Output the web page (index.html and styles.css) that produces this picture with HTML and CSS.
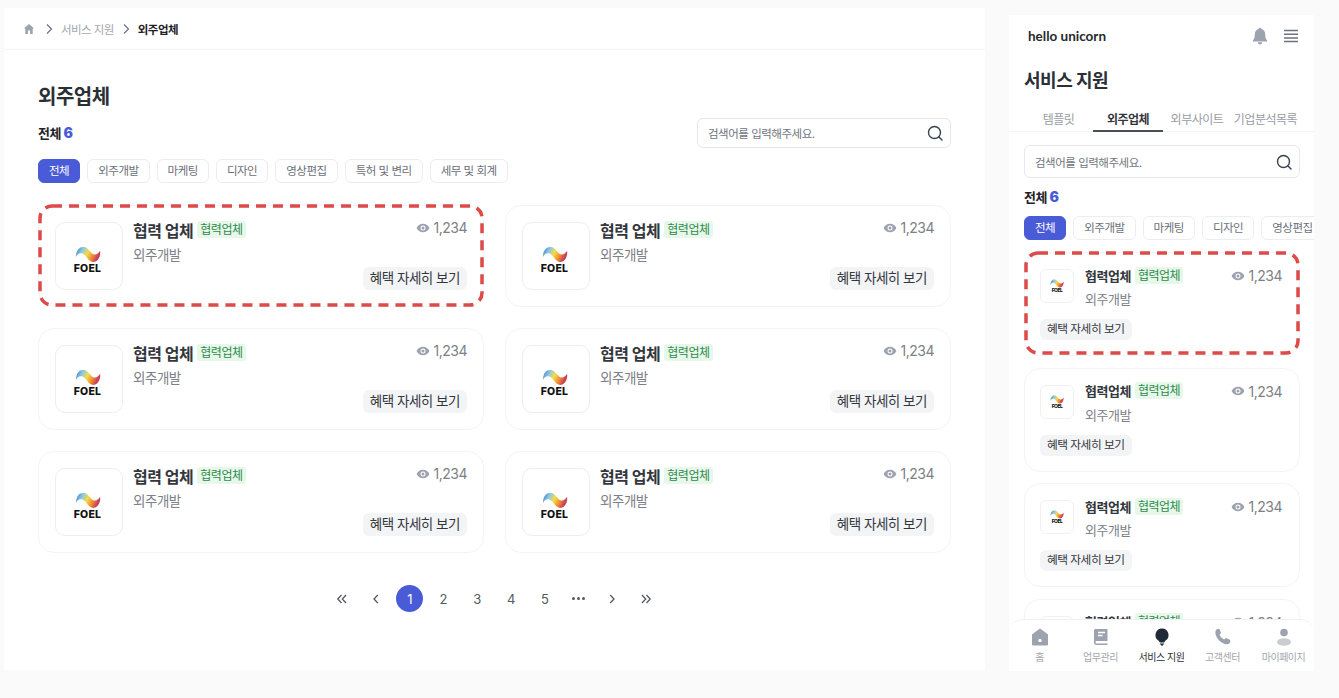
FILE: index.html
```html
<!DOCTYPE html>
<html lang="ko">
<head>
  <meta charset="UTF-8" />
  <meta name="viewport" content="width=device-width, initial-scale=1.0"/>
  <title>외주업체</title>
  <link rel="stylesheet" href="styles.css">
</head>
<body>
  <svg class="defs" width="0" height="0">
    <defs>
      <linearGradient id="wave" x1="0" y1="0" x2="1" y2="0.3">
        <stop offset="0%" stop-color="#2a76cf"/>
        <stop offset="30%" stop-color="#8fc9e0"/>
        <stop offset="55%" stop-color="#f4dc4a"/>
        <stop offset="80%" stop-color="#ef8a2e"/>
        <stop offset="100%" stop-color="#c9405c"/>
      </linearGradient>
      <symbol id="logo" viewBox="0 0 28 18">
        <path d="M1 12C1 3 6 0 10 1c5 1 7 8 11 8 3 0 5-2 6-4 1 5-2 12-7 12-6 0-8-8-12-9-3-1-6 1-7 4z" fill="url(#wave)"/>
      </symbol>
      <symbol id="eye" viewBox="0 0 14 14">
        <path d="M7 2.800C4 2.800 1.600 4.600.6 7c1 2.400 3.400 4.200 6.400 4.200s5.400-1.800 6.400-4.200C12.400 4.600 10 2.800 7 2.800z" fill="#9ca3af"/>
        <circle cx="7" cy="7" r="2.500" fill="#fff"/>
        <circle cx="7" cy="7" r="1.500" fill="#9ca3af"/>
      </symbol>
      <symbol id="search" viewBox="0 0 18 18">
        <circle cx="8.500" cy="8.500" r="6" fill="none" stroke="#374151" stroke-width="1.400"/>
        <path d="M13 13l3 3" fill="none" stroke="#374151" stroke-width="1.400" stroke-linecap="round"/>
      </symbol>
    </defs>
  </svg>

  <!-- PC 화면 -->
  <main class="desk">
    <div class="crumbs">
      <svg class="crumb-home" viewBox="0 0 12 12"><path d="M6 1L.8 5.600h1.500V11h2.600V7.600h2.200V11h2.600V5.600h1.500z" fill="#9ca3af"/></svg>
      <svg class="crumb-arrow" viewBox="0 0 8 12"><path d="M2 1.500L6.500 6 2 10.500" fill="none" stroke="#6b7280" stroke-width="1.200"/></svg>
      <span class="crumb-link">서비스 지원</span>
      <svg class="crumb-arrow" viewBox="0 0 8 12"><path d="M2 1.500L6.500 6 2 10.500" fill="none" stroke="#6b7280" stroke-width="1.200"/></svg>
      <strong class="crumb-now">외주업체</strong>
    </div>

    <div class="desk-body">
      <h1 class="desk-title">외주업체</h1>
      <div class="count-row">
        <div class="count">전체 <b>6</b></div>
        <div class="search">
          <span>검색어를 입력해주세요.</span>
          <svg class="search-icon"><use href="#search"/></svg>
        </div>
      </div>
      <div class="chips">
        <span class="chip on">전체</span>
        <span class="chip">외주개발</span>
        <span class="chip">마케팅</span>
        <span class="chip">디자인</span>
        <span class="chip">영상편집</span>
        <span class="chip">특허 및 변리</span>
        <span class="chip">세무 및 회계</span>
      </div>

      <div class="grid">
        <div class="card">
          <svg class="dash" width="446" height="104"><rect x="2" y="2" width="442" height="99" rx="12"/></svg>
          <div class="thumb"><svg class="wave"><use href="#logo"/></svg><span class="foel">FOEL</span></div>
          <div class="info">
            <div class="top">
              <span class="name">협력 업체</span><span class="badge">협력업체</span>
              <span class="views"><svg class="eye"><use href="#eye"/></svg>1,234</span>
            </div>
            <div class="kind">외주개발</div>
            <div class="more-row"><span class="more">혜택 자세히 보기</span></div>
          </div>
        </div>
        <div class="card">
          <div class="thumb"><svg class="wave"><use href="#logo"/></svg><span class="foel">FOEL</span></div>
          <div class="info">
            <div class="top">
              <span class="name">협력 업체</span><span class="badge">협력업체</span>
              <span class="views"><svg class="eye"><use href="#eye"/></svg>1,234</span>
            </div>
            <div class="kind">외주개발</div>
            <div class="more-row"><span class="more">혜택 자세히 보기</span></div>
          </div>
        </div>
        <div class="card">
          <div class="thumb"><svg class="wave"><use href="#logo"/></svg><span class="foel">FOEL</span></div>
          <div class="info">
            <div class="top">
              <span class="name">협력 업체</span><span class="badge">협력업체</span>
              <span class="views"><svg class="eye"><use href="#eye"/></svg>1,234</span>
            </div>
            <div class="kind">외주개발</div>
            <div class="more-row"><span class="more">혜택 자세히 보기</span></div>
          </div>
        </div>
        <div class="card">
          <div class="thumb"><svg class="wave"><use href="#logo"/></svg><span class="foel">FOEL</span></div>
          <div class="info">
            <div class="top">
              <span class="name">협력 업체</span><span class="badge">협력업체</span>
              <span class="views"><svg class="eye"><use href="#eye"/></svg>1,234</span>
            </div>
            <div class="kind">외주개발</div>
            <div class="more-row"><span class="more">혜택 자세히 보기</span></div>
          </div>
        </div>
        <div class="card">
          <div class="thumb"><svg class="wave"><use href="#logo"/></svg><span class="foel">FOEL</span></div>
          <div class="info">
            <div class="top">
              <span class="name">협력 업체</span><span class="badge">협력업체</span>
              <span class="views"><svg class="eye"><use href="#eye"/></svg>1,234</span>
            </div>
            <div class="kind">외주개발</div>
            <div class="more-row"><span class="more">혜택 자세히 보기</span></div>
          </div>
        </div>
        <div class="card">
          <div class="thumb"><svg class="wave"><use href="#logo"/></svg><span class="foel">FOEL</span></div>
          <div class="info">
            <div class="top">
              <span class="name">협력 업체</span><span class="badge">협력업체</span>
              <span class="views"><svg class="eye"><use href="#eye"/></svg>1,234</span>
            </div>
            <div class="kind">외주개발</div>
            <div class="more-row"><span class="more">혜택 자세히 보기</span></div>
          </div>
        </div>
      </div>

      <div class="pager">
        <span class="pg"><svg viewBox="0 0 12 12"><path d="M5.500 2L1.800 6l3.700 4M10 2L6.300 6l3.700 4"/></svg></span>
        <span class="pg"><svg viewBox="0 0 12 12"><path d="M7.800 2L4 6l3.800 4"/></svg></span>
        <span class="pg cur">1</span>
        <span class="pg">2</span>
        <span class="pg">3</span>
        <span class="pg">4</span>
        <span class="pg">5</span>
        <span class="pg dots"><i></i><i></i><i></i></span>
        <span class="pg"><svg viewBox="0 0 12 12"><path d="M4.200 2L8 6l-3.800 4"/></svg></span>
        <span class="pg"><svg viewBox="0 0 12 12"><path d="M2 2l3.700 4L2 10M6.500 2l3.700 4-3.700 4"/></svg></span>
      </div>
    </div>
  </main>

  <!-- 모바일 화면 -->
  <section class="phone">
    <header class="ph-head">
      <span class="brand">hello unicorn</span>
      <div class="ph-icons">
        <svg class="bell" viewBox="0 0 18 18"><path d="M9 .8c-.800 0-1.300.500-1.400 1.200C5 2.700 3.800 4.700 3.800 7.200c0 3.300-.500 4.800-2 6.200v1h14.400v-1c-1.500-1.400-2-2.900-2-6.200 0-2.500-1.200-4.500-3.800-5.200C10.300 1.300 9.800.800 9 .800z" fill="#9ca3af"/><path d="M6.800 15.200a2.200 2.200 0 0 0 4.400 0z" fill="#9ca3af"/></svg>
        <svg class="burger" viewBox="0 0 14 14"><path d="M0 1.500h14M0 5.200h14M0 8.900h14M0 12.500h14" stroke="#6b7280" stroke-width="1.500"/></svg>
      </div>
    </header>
    <h2 class="ph-title">서비스 지원</h2>
    <nav class="tabs">
      <span class="tab">템플릿</span>
      <span class="tab on">외주업체</span>
      <span class="tab">외부사이트</span>
      <span class="tab">기업분석목록</span>
    </nav>
    <div class="ph-body">
      <div class="search ph-search">
        <span>검색어를 입력해주세요.</span>
        <svg class="search-icon"><use href="#search"/></svg>
      </div>
      <div class="count ph-count">전체 <b>6</b></div>
      <div class="chips ph-chips">
        <span class="chip on">전체</span>
        <span class="chip">외주개발</span>
        <span class="chip">마케팅</span>
        <span class="chip">디자인</span>
        <span class="chip">영상편집</span>
      </div>
      <div class="ph-list">
        <div class="ph-card">
          <svg class="dash" width="276" height="106"><rect x="2" y="2" width="272" height="100" rx="12"/></svg>
          <div class="ph-top">
            <div class="ph-thumb"><svg class="wave-s"><use href="#logo"/></svg><span class="foel-s">FOEL</span></div>
            <div class="ph-info">
              <div class="top"><span class="ph-name">협력업체</span><span class="badge ph-badge">협력업체</span><span class="views ph-views"><svg class="eye"><use href="#eye"/></svg>1,234</span></div>
              <div class="ph-kind">외주개발</div>
            </div>
          </div>
          <span class="more ph-more">혜택 자세히 보기</span>
        </div>
        <div class="ph-card">
          <div class="ph-top">
            <div class="ph-thumb"><svg class="wave-s"><use href="#logo"/></svg><span class="foel-s">FOEL</span></div>
            <div class="ph-info">
              <div class="top"><span class="ph-name">협력업체</span><span class="badge ph-badge">협력업체</span><span class="views ph-views"><svg class="eye"><use href="#eye"/></svg>1,234</span></div>
              <div class="ph-kind">외주개발</div>
            </div>
          </div>
          <span class="more ph-more">혜택 자세히 보기</span>
        </div>
        <div class="ph-card">
          <div class="ph-top">
            <div class="ph-thumb"><svg class="wave-s"><use href="#logo"/></svg><span class="foel-s">FOEL</span></div>
            <div class="ph-info">
              <div class="top"><span class="ph-name">협력업체</span><span class="badge ph-badge">협력업체</span><span class="views ph-views"><svg class="eye"><use href="#eye"/></svg>1,234</span></div>
              <div class="ph-kind">외주개발</div>
            </div>
          </div>
          <span class="more ph-more">혜택 자세히 보기</span>
        </div>
        <div class="ph-card">
          <div class="ph-top">
            <div class="ph-thumb"></div>
            <div class="ph-info">
              <div class="top"><span class="ph-name">협력업체</span><span class="badge ph-badge">협력업체</span><span class="views ph-views"><svg class="eye"><use href="#eye"/></svg>1,234</span></div>
            </div>
          </div>
        </div>
      </div>
    </div>

    <!-- 하단 메뉴 -->
    <nav class="bottom">
      <div class="bt">
        <svg viewBox="0 0 18 18"><path d="M9 1L1.500 6.500V17h15V6.500z" fill="#9ca3af" stroke="#9ca3af" stroke-linejoin="round"/><circle cx="9" cy="12.500" r="1.700" fill="#fff"/></svg>
        <span>홈</span>
      </div>
      <div class="bt">
        <svg viewBox="0 0 18 18"><path d="M3 1h12.500v12H5c-1 0-1.500.500-1.500 1.200S4 15.500 5 15.500h10.500V17H4.500C3 17 2 16 2 14.500V2z" fill="#9ca3af"/><path d="M6 4.500h7M6 7.500h4.500" stroke="#fff" stroke-width="1.300"/></svg>
        <span>업무관리</span>
      </div>
      <div class="bt act">
        <svg viewBox="0 0 18 18"><path d="M9 .5a6.500 6.500 0 0 0-3.500 12L6.500 14h5l1-1.500A6.500 6.500 0 0 0 9 .5z" fill="#1f2937"/><path d="M6.800 15h4.400M7.500 16.500h3M8.200 17.800h1.600" stroke="#1f2937" stroke-width="1"/></svg>
        <span>서비스 지원</span>
      </div>
      <div class="bt">
        <svg viewBox="0 0 18 18"><path d="M2.500 1.500c1.500-1 3-.800 3.500.500l.8 2.200c.300 1-.300 1.600-1.300 2.300.800 2.300 2.400 4 4.700 5 .800-1 1.500-1.500 2.500-1.200l2.700 1.100c1.200.500 1.300 2.200.300 3.600-1 1.300-3 1.800-5.500.800C6 14.300 3 10.800 1.800 7 1 4.500 1.300 2.500 2.500 1.500z" fill="#9ca3af"/></svg>
        <span>고객센터</span>
      </div>
      <div class="bt">
        <svg viewBox="0 0 18 18"><circle cx="9" cy="4.500" r="3.800" fill="#9ca3af"/><ellipse cx="9" cy="14" rx="7" ry="3.800" fill="#c9ccd1"/></svg>
        <span>마이페이지</span>
      </div>
    </nav>
  </section>
</body>
</html>
```

FILE: styles.css
```css
html, body {
  margin: 0;
  padding: 0;
  height: 100%;
  overflow: hidden;
}

body {
  background: #fafafa;
  color: #1f2329;
  font-family: Inter, "Noto Sans CJK KR", sans-serif;
  display: flex;
  align-items: flex-start;
  letter-spacing: -0.03em;
}

.defs {
  position: absolute;
}

/* PC 화면 */
.desk {
  width: 981px;
  height: 662px;
  margin: 8px 0 0 4px;
  background: #fff;
  flex: none;
}

.crumbs {
  height: 41px;
  border-bottom: 1px solid #f3f4f6;
  padding-left: 19px;
  display: flex;
  align-items: center;
  font-size: 11.500px;
}

.crumb-home {
  width: 12px;
  height: 12px;
  margin-right: 10px;
}

.crumb-arrow {
  width: 8px;
  height: 12px;
  margin-right: 8px;
}

.crumb-link {
  color: #a3a7ae;
  margin-right: 8px;
  letter-spacing: -0.05em;
}

.crumb-now {
  font-weight: 700;
  color: #1f2329;
  margin-left: 0;
}

.desk-body {
  padding: 32px 34px 0;
}

.desk-title {
  margin: 0;
  font-size: 20px;
  line-height: 30px;
  font-weight: 700;
  color: #2b2f36;
}

.count-row {
  display: flex;
  justify-content: space-between;
  align-items: center;
  margin-top: 6px;
  height: 30px;
}

.count {
  font-size: 13px;
  font-weight: 700;
  margin-top: -2px;
}

.count b {
  color: #4a5bd8;
  font-size: 14px;
}

.search {
  width: 254px;
  height: 30px;
  box-sizing: border-box;
  border: 1px solid #e5e7eb;
  border-radius: 6px;
  padding: 0 6px 0 10px;
  display: flex;
  align-items: center;
  justify-content: space-between;
  font-size: 11.500px;
  color: #70757d;
}

.search-icon {
  width: 18px;
  height: 18px;
}

.chips {
  display: flex;
  gap: 7px;
  margin-top: 11px;
}

.chip {
  height: 24px;
  box-sizing: border-box;
  padding: 0 10px;
  border: 1px solid #ebedf0;
  border-radius: 6px;
  font-size: 11.500px;
  line-height: 22px;
  color: #6b7078;
  white-space: nowrap;
  flex: none;
}

.chip.on {
  background: #4a5bd8;
  border-color: #4a5bd8;
  color: #fff;
}

.grid {
  display: grid;
  grid-template-columns: 446px 446px;
  column-gap: 21px;
  row-gap: 21px;
  margin-top: 22px;
}

.card {
  position: relative;
  height: 102px;
  box-sizing: border-box;
  padding: 16px 16px 0 16px;
  border: 1px solid #f3f4f6;
  border-radius: 16px;
  display: flex;
  gap: 10px;
}

.dash {
  position: absolute;
  left: -1px;
  top: -2px;
}

.dash rect {
  fill: none;
  stroke: #dd4a4a;
  stroke-width: 3.500;
  stroke-dasharray: 10 7;
}

.thumb {
  width: 68px;
  height: 68px;
  box-sizing: border-box;
  border: 1px solid #eceef0;
  border-radius: 10px;
  display: flex;
  flex-direction: column;
  align-items: center;
  justify-content: center;
  flex: none;
}

.wave {
  width: 26px;
  height: 17px;
  margin: 8px 3px 1px 0;
}

.foel {
  font-size: 10.500px;
  font-weight: 800;
  line-height: 10px;
  letter-spacing: 0.02em;
  color: #111;
  margin-right: 3px;
}

.info {
  flex: 1;
  min-width: 0;
  margin-top: -2px;
}

.top {
  display: flex;
  align-items: center;
  height: 18px;
}

.name {
  font-size: 16px;
  font-weight: 700;
  color: #33373d;
  margin-top: 1px;
}

.badge {
  margin-left: 4px;
  padding: 0 3px;
  background: #e7f8ea;
  border-radius: 3px;
  color: #2e8a4c;
  font-size: 12px;
  line-height: 17px;
}

.views {
  margin-left: auto;
  margin-top: -3px;
  display: flex;
  align-items: center;
  gap: 3px;
  color: #7c8087;
  font-size: 14px;
}

.eye {
  width: 14px;
  height: 14px;
}

.kind {
  margin-top: 7px;
  font-size: 13.500px;
  line-height: 20px;
  color: #7c8087;
}

.more-row {
  display: flex;
  justify-content: flex-end;
  margin-top: 2px;
}

.more {
  background: #f3f4f6;
  border-radius: 6px;
  padding: 0 7px;
  height: 23px;
  line-height: 23px;
  font-size: 13.500px;
  color: #33373d;
  white-space: nowrap;
}

.pager {
  display: flex;
  justify-content: center;
  margin-top: 32px;
  margin-right: 1px;
}

.pg {
  width: 27px;
  height: 27px;
  margin: 0 3.400px;
  display: flex;
  align-items: center;
  justify-content: center;
  font-size: 13px;
  color: #555a62;
  border-radius: 50%;
}

.pg svg {
  width: 12px;
  height: 12px;
}

.pg svg path {
  fill: none;
  stroke: #555a62;
  stroke-width: 1.300;
}

.pg.cur {
  background: #4a5bd8;
  color: #fff;
}

.dots {
  gap: 2px;
}

.dots i {
  width: 3px;
  height: 3px;
  border-radius: 50%;
  background: #555a62;
}

/* 모바일 화면 */
.phone {
  position: relative;
  width: 305px;
  height: 656px;
  margin: 15px 0 0 24px;
  background: #fff;
  overflow: hidden;
  flex: none;
}

.ph-head {
  display: flex;
  justify-content: space-between;
  align-items: center;
  padding: 9px 16px 1px 19px;
  height: 24px;
}

.brand {
  font-family: Lato, sans-serif;
  font-size: 13.500px;
  font-weight: 700;
  letter-spacing: 0;
  color: #26292e;
}

.ph-icons {
  display: flex;
  align-items: center;
  gap: 15px;
}

.bell {
  width: 18px;
  height: 18px;
}

.burger {
  width: 14px;
  height: 14px;
}

.ph-title {
  margin: 19px 0 0 15px;
  font-size: 18px;
  line-height: 26px;
  font-weight: 700;
  color: #2b2f36;
}

.tabs {
  display: flex;
  margin-top: 13px;
  height: 25px;
  box-sizing: border-box;
  border-bottom: 1px solid #f3f4f6;
  padding-left: 15px;
}

.tab {
  font-size: 12px;
  line-height: 25px;
  color: #989ca3;
  text-align: center;
  white-space: nowrap;
  width: 68px;
  flex: none;
}

.tab:first-child {
  width: 69px;
}

.tab:nth-child(4) {
  width: 69px;
}

.tab.on {
  font-weight: 700;
  color: #33373d;
  width: 70px;
  height: 25px;
  box-sizing: border-box;
  border-bottom: 2px solid #4b4f56;
}

.ph-body {
  padding: 13px 0 0 15px;
}

.ph-search {
  width: 276px;
  height: 33px;
}

.ph-count {
  margin-top: 9px;
  line-height: 20px;
}

.ph-chips {
  margin-top: 9px;
}

.ph-list {
  display: flex;
  flex-direction: column;
  gap: 11.500px;
  margin-top: 12px;
  width: 276px;
}

.ph-card {
  position: relative;
  height: 104px;
  box-sizing: border-box;
  flex: none;
  padding: 14px 17px 0 15px;
  border: 1px solid #f3f4f6;
  border-radius: 16px;
}

.ph-top {
  display: flex;
  gap: 11px;
}

.ph-thumb {
  width: 34px;
  height: 34px;
  box-sizing: border-box;
  border: 1px solid #f0f1f3;
  border-radius: 6px;
  margin-top: 2px;
  display: flex;
  flex-direction: column;
  align-items: center;
  justify-content: center;
  flex: none;
}

.wave-s {
  width: 14px;
  height: 9px;
}

.foel-s {
  font-size: 5px;
  font-weight: 800;
  line-height: 5px;
  color: #111;
}

.ph-info {
  flex: 1;
  min-width: 0;
}

.ph-name {
  font-size: 13px;
  font-weight: 700;
  color: #33373d;
  margin-top: -2px;
}

.ph-badge {
  margin-left: 4px;
  margin-top: -2px;
}

.ph-views {
  margin-top: -1px;
}

.ph-kind {
  font-size: 13px;
  line-height: 20px;
  margin-top: 4px;
  color: #7c8087;
}

.ph-more {
  display: inline-block;
  margin-top: 10px;
  height: 21px;
  line-height: 21px;
  font-size: 11.700px;
}

.bottom {
  position: absolute;
  left: 0;
  right: 0;
  bottom: 0;
  height: 51px;
  background: #fff;
  border-top: 1px solid #f0f1f3;
  border-radius: 14px 14px 0 0;
  display: grid;
  grid-template-columns: repeat(5, 1fr);
}

.bt {
  display: flex;
  flex-direction: column;
  align-items: center;
  padding-top: 8px;
  color: #a3a7ae;
  font-size: 10px;
  line-height: 14px;
  white-space: nowrap;
}

.bt svg {
  width: 18px;
  height: 18px;
  margin-bottom: 4px;
}

.bt.act {
  color: #2b2f36;
}
```
